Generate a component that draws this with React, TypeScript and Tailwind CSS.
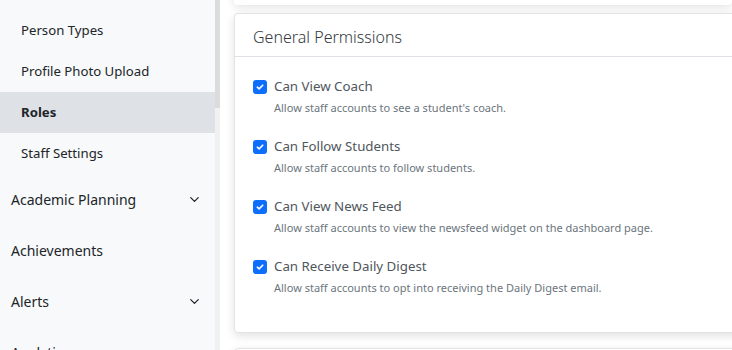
import { ChevronDown } from 'lucide-react';

const subItems = [
  { label: 'Person Types' },
  { label: 'Profile Photo Upload' },
  { label: 'Roles', active: true },
  { label: 'Staff Settings' },
];

const sections = [
  { label: 'Academic Planning', expandable: true },
  { label: 'Achievements' },
  { label: 'Alerts', expandable: true },
  { label: 'Analytics', expandable: true },
];

const permissions = [
  { label: 'Can View Coach', help: "Allow staff accounts to see a student's coach." },
  { label: 'Can Follow Students', help: 'Allow staff accounts to follow students.' },
  { label: 'Can View News Feed', help: 'Allow staff accounts to view the newsfeed widget on the dashboard page.' },
  { label: 'Can Receive Daily Digest', help: 'Allow staff accounts to opt into receiving the Daily Digest email.' },
];

function Checkbox() {
  return (
    <span className="flex h-[14px] w-[14px] shrink-0 items-center justify-center rounded-[3px] bg-[#0d6efd]">
      <svg width="8" height="8" viewBox="0 0 8 8" fill="none">
        <path d="M1.3 4.2 3.1 5.9 6.7 2.2" stroke="white" strokeWidth="1.6" strokeLinecap="round" strokeLinejoin="round" />
      </svg>
    </span>
  );
}

export default function App() {
  return (
    <div className="flex h-[350px] w-[732px] overflow-hidden bg-white font-['Noto_Sans',sans-serif]">
      {/* Sidebar */}
      <aside className="flex w-[220px] shrink-0">
        <nav className="w-[215px] bg-[#f8f9fa] pt-[10px]">
          {subItems.map(item => (
            <div
              key={item.label}
              className={`flex h-[41px] items-center pl-[21px] text-[13.2px] text-[#212529] ${
                item.active ? 'bg-[#dee2e6] font-bold' : ''
              }`}
            >
              {item.label}
            </div>
          ))}
          {sections.map(s => (
            <div key={s.label} className="flex h-[51px] items-center justify-between pl-[11px] pr-[13px] text-[14px] text-[#212529]">
              <span>{s.label}</span>
              {s.expandable && <ChevronDown size={15} strokeWidth={2} className="text-[#212529]" />}
            </div>
          ))}
        </nav>
        {/* scrollbar */}
        <div className="w-[5px] bg-[#f1f1f1]">
          <div className="h-[108px] bg-[#dcdcdc]" />
        </div>
      </aside>

      {/* Main */}
      <main className="flex-1 pl-[14px]">
        <div className="-mt-[10px] h-[15px] rounded-b-[4px] bg-white shadow-[0_2px_10px_rgba(0,0,0,0.12)]" />
        <section className="mt-[8px] -mr-[10px] h-[320px] rounded-[4px] border border-[#e3e3e3] bg-white shadow-[0_3px_10px_rgba(0,0,0,0.12)]">
          <header className="flex h-[43px] items-center border-b border-[#dee2e6] pl-[18px] pt-[3px] text-[16px] font-light text-[#343a40]">
            General Permissions
          </header>
          <div className="pl-[18px] pt-[22px]">
            {permissions.map(p => (
              <div key={p.label} className="h-[60px]">
                <label className="flex h-[16px] items-center gap-[7px] text-[13.3px] text-[#4f565c]">
                  <Checkbox />
                  <span>{p.label}</span>
                </label>
                <p className="mt-[5px] pl-[21px] text-[11px] text-[#6c757d]">{p.help}</p>
              </div>
            ))}
          </div>
        </section>
        <div className="mt-[15px] -mr-[10px] h-[40px] rounded-[4px] border border-[#e3e3e3] bg-white shadow-[0_3px_10px_rgba(0,0,0,0.12)]" />
      </main>
    </div>
  );
}
